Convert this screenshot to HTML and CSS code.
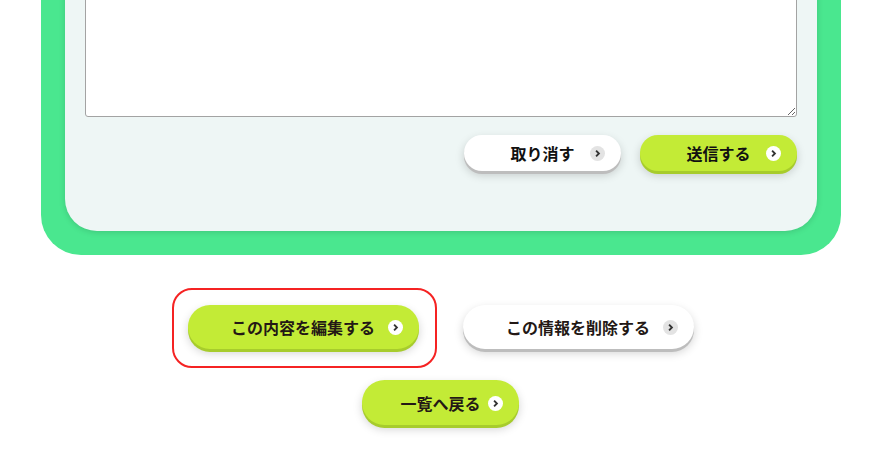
FILE: index.html
```html
<!DOCTYPE html>
<html lang="ja">
<head>
  <meta charset="UTF-8" />
  <meta name="viewport" content="width=device-width, initial-scale=1.0"/>
  <title>お問い合わせ</title>
  <link rel="stylesheet" href="styles.css">
</head>
<body>
  <div class="frame">
    <form class="panel">
      <textarea class="message"></textarea>
      <div class="form-actions">
        <button type="button" class="btn btn-white btn-sm">取り消す<span class="arrow"><svg viewBox="0 0 16 16"><path d="M6.5 5l3 3-3 3" /></svg></span></button>
        <button type="button" class="btn btn-lime btn-sm">送信する<span class="arrow"><svg viewBox="0 0 16 16"><path d="M6.5 5l3 3-3 3" /></svg></span></button>
      </div>
    </form>
  </div>

  <div class="page-actions">
    <div class="row">
      <button type="button" class="btn btn-lime btn-wide is-focused">この内容を編集する<span class="arrow"><svg viewBox="0 0 16 16"><path d="M6.5 5l3 3-3 3" /></svg></span></button>
      <button type="button" class="btn btn-white btn-wide">この情報を削除する<span class="arrow"><svg viewBox="0 0 16 16"><path d="M6.5 5l3 3-3 3" /></svg></span></button>
    </div>
    <div class="row">
      <button type="button" class="btn btn-lime">一覧へ戻る<span class="arrow"><svg viewBox="0 0 16 16"><path d="M6.5 5l3 3-3 3" /></svg></span></button>
    </div>
  </div>
</body>
</html>
```

FILE: styles.css
```css
body {
  margin: 0;
  padding-bottom: 40px;
  font-family: "Noto Sans CJK JP", "Noto Sans", sans-serif;
  background: #fff;
  color: #1a1a1a;
}
.frame {
  width: 800px;
  box-sizing: border-box;
  margin: -127px 0 0 41px;
  padding: 24px;
  background: #4ae78f;
  border-radius: 0 0 40px 40px;
}
.panel {
  background: #eef6f5;
  border-radius: 0 0 32px 32px;
  padding: 20px 20px 60px;
  box-shadow: 0 1px 6px rgba(0, 0, 0, 0.15);
}
.message {
  display: block;
  width: 100%;
  height: 200px;
  box-sizing: border-box;
  border: 1px solid #a3a3a3;
  border-radius: 3px;
  background: #fff;
  resize: both;
}
.form-actions {
  display: flex;
  justify-content: flex-end;
  gap: 19px;
  margin-top: 18px;
}
.btn {
  position: relative;
  display: flex;
  align-items: center;
  justify-content: center;
  width: 157px;
  height: 45px;
  padding: 0;
  border: 0;
  border-radius: 23px;
  font-family: inherit;
  font-size: 16px;
  font-weight: 700;
  color: #231815;
  cursor: pointer;
}
.btn-sm {
  width: 157px;
  height: 36px;
  border-radius: 18px;
  color: #111;
}
.btn-wide {
  width: 231px;
  height: 44px;
  border-radius: 22px;
}
.btn-lime {
  background: #c3eb36;
  box-shadow: 0 3px 0 #a7cc2c, 0 4px 10px rgba(0, 0, 0, 0.18);
}
.btn-white {
  background: #fff;
  box-shadow: 0 3px 0 #bdbdbd, 0 4px 10px rgba(0, 0, 0, 0.18);
}
.arrow {
  position: absolute;
  right: 16px;
  top: 50%;
  width: 15px;
  height: 15px;
  margin-top: -7px;
  border-radius: 50%;
  background: #fff;
  display: flex;
}
.btn-white .arrow {
  background: #e3e3e3;
}
.arrow svg {
  width: 15px;
  height: 15px;
  fill: none;
  stroke: #333;
  stroke-width: 2;
}
.page-actions {
  display: flex;
  flex-direction: column;
  align-items: center;
  gap: 31px;
  margin-top: 50px;
  padding-right: 3px;
}
.row {
  display: flex;
  gap: 44px;
}
.is-focused::after {
  content: "";
  position: absolute;
  top: -17px;
  left: -16px;
  right: -18px;
  bottom: -19px;
  border: 2px solid #f52323;
  border-radius: 20px;
}
```
